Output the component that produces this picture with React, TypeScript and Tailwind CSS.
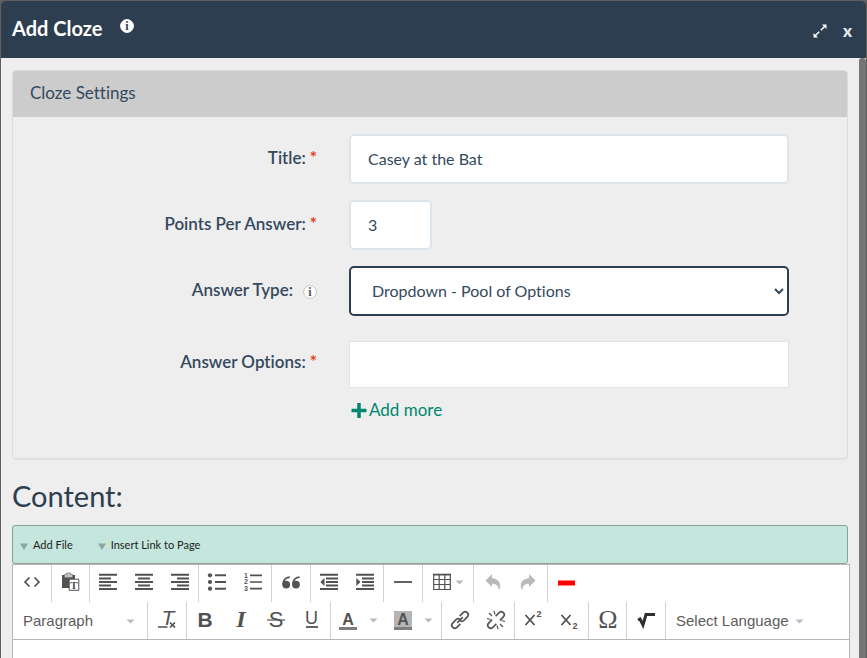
import { useState } from 'react'
import type { ReactNode } from 'react'

const rowClass = 'grid grid-cols-[304px_1fr] gap-x-8'
const labelClass = 'flex items-center justify-end gap-1 pb-0.5 text-right text-[17px] font-semibold leading-6 text-[#34495e]'
const fieldClass = 'h-[50px] rounded-[5px] border-2 border-[#dce4ec] bg-white px-[17px] pb-0.5 text-base text-[#34495e] outline-none'

function Required() {
  return <span className="font-bold text-[#e2401c]" aria-hidden>*</span>
}

function InfoIcon({ fill, ring, ink }: { fill: string; ring: string; ink: string }) {
  return (
    <svg width="14" height="14" viewBox="0 0 14 14" aria-hidden>
      <circle cx="7" cy="7" r="6.4" fill={fill} stroke={ring} />
      <text x="7" y="11" textAnchor="middle" fontFamily="Liberation Serif, serif" fontWeight="700" fontSize="12" fill={ink}>i</text>
    </svg>
  )
}

function Glyph({ children }: { children: ReactNode }) {
  return (
    <svg width="18" height="18" viewBox="0 0 18 18" fill="none" stroke="#525252" strokeWidth="1.6" className="shrink-0 overflow-visible" aria-hidden>
      {children}
    </svg>
  )
}

function Letter({ children, size = 18, weight = 400, italic = false, family = 'Liberation Sans, sans-serif', x = 9, y = 15 }: {
  children: ReactNode; size?: number; weight?: number; italic?: boolean; family?: string; x?: number; y?: number
}) {
  return (
    <text x={x} y={y} textAnchor="middle" fontFamily={family} fontSize={size} fontWeight={weight} fontStyle={italic ? 'italic' : 'normal'} fill="#525252" stroke="none">
      {children}
    </text>
  )
}

function Caret() {
  return (
    <svg width="9" height="5" viewBox="0 0 9 5" className="shrink-0" aria-hidden>
      <path d="M0.5 0.5h8L4.5 4.5z" fill="#b4bcc2" />
    </svg>
  )
}

function DropMark() {
  return (
    <svg width="10" height="8" viewBox="0 0 10 8" className="mt-0.5" aria-hidden>
      <path d="M1 1.5h8L5 8z" fill="#8aa69e" />
    </svg>
  )
}

function Tool({ label, gap, disabled, children }: { label: string; gap?: string; disabled?: boolean; children: ReactNode }) {
  return (
    <button type="button" title={label} aria-label={label} disabled={disabled} className={`flex h-full flex-1 items-center justify-center ${gap ?? ''}`}>
      <Glyph>{children}</Glyph>
      {gap && <Caret />}
    </button>
  )
}

function Group({ width, last, children }: { width: string; last?: boolean; children: ReactNode }) {
  return <div className={`flex h-full shrink-0 ${width} ${last ? '' : 'border-r border-[#d1d1d1]'}`}>{children}</div>
}

function Toolbar() {
  return (
    <div role="toolbar" aria-label="Editor toolbar" className="border-b border-[#b6b6b6] font-['Liberation_Sans',sans-serif] text-[15px] text-[#5c5c5c]">
      <div className="flex h-[37px] [&_button]:pb-0.5">
        <Group width="w-[39px]">
          <Tool label="Source"><path d="M6.5 4.5 2 9l4.5 4.5M11.5 4.5 16 9l-4.5 4.5" strokeWidth="1.7" /></Tool>
        </Group>
        <Group width="w-[38px]">
          <Tool label="Paste as plain text">
            <path d="M0 2h13v13H0z" fill="#525252" stroke="none" />
            <path d="M2.5 1.5h2V0h4v1.5h2v3h-8z" fill="#c2c2b8" stroke="#777" strokeWidth="0.7" />
            <path d="M7.2 6.2h9.6v11.1H7.2z" fill="#fff" strokeWidth="1" />
            <Letter x={12} y={15.5} size={11} weight={700} family="Liberation Serif, serif">T</Letter>
          </Tool>
        </Group>
        <Group width="w-[109px]">
          <Tool label="Align left"><path d="M0 1.8h18M0 5.4h12M0 9h18M0 12.4h12M0 16h18" strokeWidth="2" /></Tool>
          <Tool label="Center"><path d="M0 1.8h18M3 5.4h12M0 9h18M3 12.4h12M0 16h18" strokeWidth="2" /></Tool>
          <Tool label="Align right"><path d="M0 1.8h18M6 5.4h12M0 9h18M6 12.4h12M0 16h18" strokeWidth="2" /></Tool>
        </Group>
        <Group width="w-[73px]">
          <Tool label="Bulleted list">
            <path d="M7 2.3h11M7 9h11M7 15.7h11" strokeWidth="1.9" />
            <g fill="#525252" stroke="none"><circle cx="2" cy="2.3" r="2.1" /><circle cx="2" cy="9" r="2.1" /><circle cx="2" cy="15.7" r="2.1" /></g>
          </Tool>
          <Tool label="Numbered list">
            <path d="M6 2.3h12M6 9h12M6 15.7h12" strokeWidth="1.7" />
            <Letter x={2} y={4.5} size={7} weight={700}>1</Letter>
            <Letter x={2} y={11.2} size={7} weight={700}>2</Letter>
            <Letter x={2} y={18} size={7} weight={700}>3</Letter>
          </Tool>
        </Group>
        <Group width="w-[39px]">
          <Tool label="Block quote">
            <g fill="#525252" stroke="none">
              <circle cx="4.2" cy="11.6" r="3.9" /><circle cx="14" cy="11.6" r="3.9" />
            </g>
            <path d="M1.2 11.5C1.2 7.5 3.5 4.6 7.8 4.2M11 11.5c0-4 2.3-6.9 6.6-7.3" strokeWidth="1.8" />
          </Tool>
        </Group>
        <Group width="w-[73px]">
          <Tool label="Decrease indent">
            <path d="M0 1.8h18M6 5.4h12M6 9h12M6 12.4h12M0 16h18" strokeWidth="2" /><path d="M4.5 5v8L.3 9z" fill="#525252" stroke="none" />
          </Tool>
          <Tool label="Increase indent">
            <path d="M0 1.8h18M6 5.4h12M6 9h12M6 12.4h12M0 16h18" strokeWidth="2" /><path d="M.3 5v8l4.2-4z" fill="#525252" stroke="none" />
          </Tool>
        </Group>
        <Group width="w-[39px]">
          <Tool label="Horizontal line"><path d="M0 9h18" strokeWidth="1.8" /></Tool>
        </Group>
        <Group width="w-[51px]">
          <Tool label="Table" gap="gap-1">
            <path d="M.7 1.5h16.6v15H.7zM.7 6.5h16.6M.7 11.5h16.6M6.2 1.5v15M11.8 1.5v15" strokeWidth="1.2" /><path d="M0 1.6h18" strokeWidth="1.8" />
          </Tool>
        </Group>
        <Group width="w-[74px]">
          <Tool label="Undo" disabled>
            <path d="M9 1v4.2c5.5.2 8.3 3.6 8.2 8-.1 1.7-.8 3.2-1.7 4.1.3-4.3-1.8-6.6-6.5-6.6V14L2.5 7.5z" fill="#b9b9b9" stroke="none" />
          </Tool>
          <Tool label="Redo" disabled>
            <path d="M9 1v4.2c-5.5.2-8.3 3.6-8.2 8 .1 1.7.8 3.2 1.7 4.1-.3-4.3 1.8-6.6 6.5-6.6V14l6.5-6.500z" fill="#b9b9b9" stroke="none" />
          </Tool>
        </Group>
        <Group width="w-[38px]" last>
          <Tool label="Insert blank"><path d="M0 10h17" stroke="#f00" strokeWidth="5" /></Tool>
        </Group>
      </div>

      <div className="flex h-[37px]">
        <Group width="w-[135px]">
          <button type="button" className="flex flex-1 items-center justify-between pl-2.5 pr-3 pt-0.5">
            Paragraph <Caret />
          </button>
        </Group>
        <Group width="w-[39px]">
          <Tool label="Remove format">
            <Letter x={10} y={14} size={21} italic>T</Letter>
            <path d="M0 16h9.5M12 11.5l5 5M17 11.5l-5 5" strokeWidth="1.7" />
          </Tool>
        </Group>
        <Group width="w-[144px]">
          <Tool label="Bold"><Letter size={21} weight={700} y={16}>B</Letter></Tool>
          <Tool label="Italic"><Letter size={24} weight={700} italic y={16} family="Liberation Serif, serif">I</Letter></Tool>
          <Tool label="Strikethrough"><Letter size={22} y={16}>S</Letter><path d="M0 9h18" strokeWidth="1.2" /></Tool>
          <Tool label="Underline"><Letter size={18} y={13} x={8.5}>U</Letter><path d="M3 16h12" strokeWidth="1.8" /></Tool>
        </Group>
        <Group width="w-[111px]">
          <Tool label="Text color" gap="gap-3">
            <Letter size={16} weight={700} y={14}>A</Letter><path d="M0 17.5h18" stroke="#7d7d7d" strokeWidth="3" />
          </Tool>
          <Tool label="Background color" gap="gap-3">
            <path d="M0 0h18v17H0z" fill="#b5b5b5" stroke="none" />
            <Letter size={16} weight={700} y={14}>A</Letter><path d="M0 17.5h18" stroke="#7d7d7d" strokeWidth="3" />
          </Tool>
        </Group>
        <Group width="w-[73px]">
          <Tool label="Link">
            <g transform="rotate(-45 9 9)" strokeWidth="1.6">
              <path d="M6.5 12H1.6a3 3 0 0 1 0-6h5.2a3 3 0 0 1 2.7 2.2M11.5 6h4.9a3 3 0 0 1 0 6h-5.2a3 3 0 0 1-2.7-2.2M5 9h8" />
            </g>
          </Tool>
          <Tool label="Unlink">
            <g transform="rotate(-45 9 9)" strokeWidth="1.6">
              <path d="M6.5 12H1.6a3 3 0 0 1 0-6h4.9M11.5 6h4.9a3 3 0 0 1 0 6h-4.9" />
            </g>
            <path d="M7 0l1 3.5M2 2l3 3M0 7.5l3.5 1M11 18l-1-3.5M16 16l-3-3M18 10.5l-3.5-1" strokeWidth="1.2" />
          </Tool>
        </Group>
        <Group width="w-[74px]">
          <Tool label="Superscript"><path d="M1.5 4l9 10M10.5 4l-9 10" strokeWidth="1.8" /><Letter size={9} weight={700} x={15} y={6}>2</Letter></Tool>
          <Tool label="Subscript"><path d="M.5 4l9 10M9.5 4l-9 10" strokeWidth="1.8" /><Letter size={9} weight={700} x={14} y={18}>2</Letter></Tool>
        </Group>
        <Group width="w-[38px]">
          <Tool label="Special character"><Letter size={26} y={17} family="Liberation Serif, serif">Ω</Letter></Tool>
        </Group>
        <Group width="w-[39px]">
          <Tool label="Math"><path d="M1 9l2-1 3 6L9 3.5h9" stroke="#2e2e2e" strokeWidth="3" /></Tool>
        </Group>
        <button type="button" className="flex items-center gap-1.5 px-2.5 pt-0.5">
          Select Language <Caret />
        </button>
      </div>
    </div>
  )
}

export default function App() {
  const [title, setTitle] = useState('Casey at the Bat')
  const [points, setPoints] = useState('3')
  const [options, setOptions] = useState('')

  return (
    <div className="flex min-h-screen flex-col bg-[#5f5f5f] px-px pt-px font-[Lato,sans-serif] text-[#2c3e50] [font-variant-ligatures:none]">
      <header className="flex h-[57px] shrink-0 items-center justify-between rounded-t-[5px] bg-[#2c3e50] pb-1 pl-[11px] pr-3.5 text-white">
        <div className="flex items-center gap-[18px]">
          <h1 className="text-[20px] font-bold leading-6">Add Cloze</h1>
          <button type="button" aria-label="About cloze questions" className="pb-1">
            <InfoIcon fill="#fff" ring="#fff" ink="#2c3e50" />
          </button>
        </div>
        <div className="flex items-center gap-4 pt-1.5">
          <button type="button" aria-label="Expand">
            <svg width="14" height="14" viewBox="0 0 14 14" fill="#fff" aria-hidden>
              <path d="M9 .5h4.5V5zM.5 9v4.5H5z" />
              <path d="M7.8 6.2l4-4M2.2 11.8l4-4" stroke="#fff" strokeWidth="1.5" />
            </svg>
          </button>
          <button type="button" aria-label="Close" className="text-[17px] font-black leading-5 text-[#e8ebee]">x</button>
        </div>
      </header>

      <div className="flex flex-1 bg-[#eee]">
        <main className="flex min-w-0 flex-1 flex-col px-[11px] pt-3">
          <section aria-labelledby="settings-heading" className="rounded-[4px] border border-[#dcdcdc] shadow-[0_1px_1px_rgba(0,0,0,0.05)]">
            <h2 id="settings-heading" className="rounded-t-[3px] bg-[#ccc] px-[17px] pb-3 pt-2.5 text-[17px] leading-6 text-[#34495e]">
              Cloze Settings
            </h2>
            <form className="flex flex-col gap-4 pb-[34px] pr-[58px] pt-[17px]" onSubmit={(e) => e.preventDefault()}>
              <div className={rowClass}>
                <label htmlFor="title" className={labelClass}>Title:<Required /></label>
                <input id="title" value={title} onChange={(e) => setTitle(e.target.value)} className={`w-full ${fieldClass}`} />
              </div>
              <div className={rowClass}>
                <label htmlFor="points" className={labelClass}>Points Per Answer:<Required /></label>
                <input id="points" value={points} onChange={(e) => setPoints(e.target.value)} className={`w-[83px] ${fieldClass}`} />
              </div>
              <div className={rowClass}>
                <div className={labelClass}>
                  <label htmlFor="answer-type">Answer Type:</label>
                  <button type="button" aria-label="About answer types" className="pl-1.5 pt-1">
                    <InfoIcon fill="#fff" ring="#c4c4c4" ink="#555" />
                  </button>
                </div>
                <select id="answer-type" className="h-[50px] w-full rounded-[5px] border-2 border-[#2c3e50] bg-white px-[17px] pb-0.5 text-base text-[#34495e] outline-none">
                  <option>Dropdown - Pool of Options</option>
                  <option>Dropdown - Individual Options</option>
                  <option>Fill in the Blank</option>
                </select>
              </div>
              <div className={`${rowClass} pt-[9px]`}>
                <label htmlFor="options" className={`h-11 ${labelClass}`}>Answer Options:<Required /></label>
                <div>
                  <input id="options" value={options} onChange={(e) => setOptions(e.target.value)} className="block h-[47px] w-full border border-[#dce4ec] bg-white px-[17px] text-base outline-none" />
                  <a href="#add" className="mt-2.5 inline-flex items-center gap-0.5 pl-0.5 text-[17px] leading-6 text-[#00876f]">
                    <svg width="16" height="15" viewBox="0 0 16 15" fill="none" stroke="currentColor" strokeWidth="3.5" aria-hidden>
                      <path d="M8 0v15M.5 7.5h15" />
                    </svg>
                    Add more
                  </a>
                </div>
              </div>
            </form>
          </section>

          <h2 className="mt-[19px] text-[29px] leading-9">Content:</h2>
          <div className="mt-[11px] flex h-[39px] shrink-0 items-center gap-6 rounded-[3px] border border-[#8f9f9a] bg-[#c4e6dd] pl-1.5 pt-0.5 text-[11px] text-[#222]">
            <button type="button" className="flex items-center gap-1"><DropMark />Add File</button>
            <button type="button" className="flex items-center gap-1"><DropMark />Insert Link to Page</button>
          </div>
          <div className="-mr-0.5 flex flex-1 flex-col border border-b-0 border-[#b6b6b6] bg-white">
            <Toolbar />
            <textarea aria-label="Content" rows={1} className="block min-h-0 w-full flex-1 resize-none bg-white outline-none" />
          </div>
        </main>
        <div className="w-[7px] shrink-0 rounded-t-[3px] bg-[#757575]" />
      </div>
    </div>
  )
}
